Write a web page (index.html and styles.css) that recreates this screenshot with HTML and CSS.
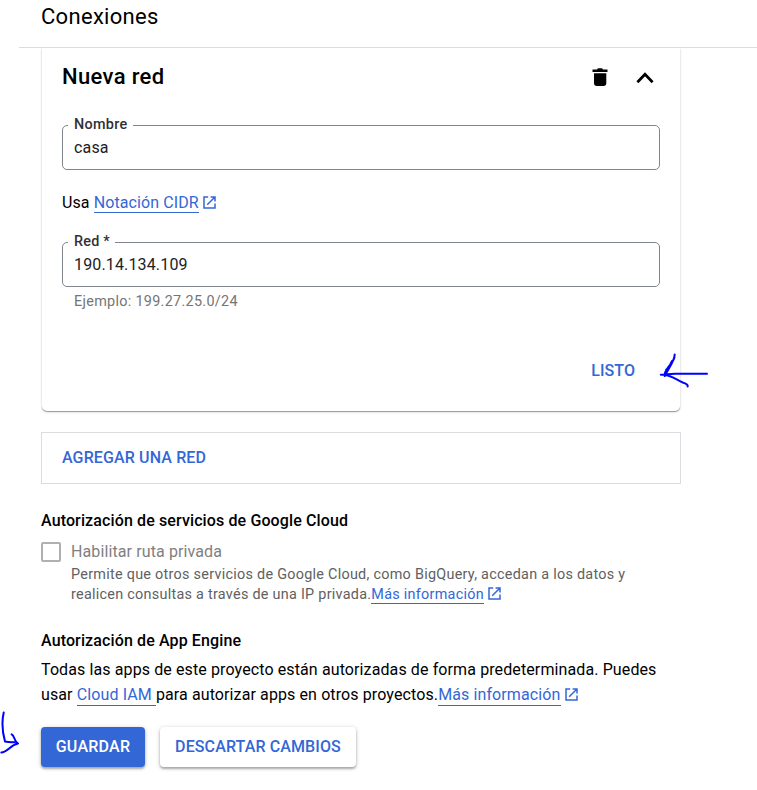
FILE: index.html
```html
<!DOCTYPE html>
<html lang="es">
<head>
<meta charset="utf-8">
<title>Conexiones</title>
<link rel="stylesheet" href="styles.css">
</head>
<body>
<svg class="defs" width="0" height="0" aria-hidden="true">
  <symbol id="external" viewBox="0 0 13 13"><path d="M5.2 1H1v11h11V7.6M7.6 1H12v4.4M12 1L4.2 8.8" fill="none" stroke="currentColor" stroke-width="1.5"/></symbol>
</svg>
<header class="header"><h1 class="header-title">Conexiones</h1></header>
<main class="content">
  <section class="card">
    <div class="card-head">
      <h2 class="card-title">Nueva red</h2>
      <svg class="trash" width="16" height="18" viewBox="0 0 16 18"><path d="M0.5 1.5H5L6 0.3h4l1 1.2h4.5v2.6H.5zM2 5.2h12.3v10.3a2.4 2.4 0 0 1-2.4 2.4H4.4A2.4 2.4 0 0 1 2 15.5z"/></svg>
      <svg class="chevron" width="18" height="12" viewBox="0 0 18 12"><path d="M1.4 10.2L9 2.2l7.6 8" fill="none" stroke="#000" stroke-width="2.7"/></svg>
    </div>
    <div class="field"><label class="field-label name-label">Nombre</label><span class="value">casa</span></div>
    <p class="hint">Usa <a class="link">Notación CIDR</a><svg class="external"><use href="#external"/></svg></p>
    <div class="field"><label class="field-label net-label">Red *</label><span class="value">190.14.134.109</span></div>
    <p class="example">Ejemplo: 199.27.25.0/24</p>
    <div class="card-actions"><button class="done">LISTO</button></div>
  </section>
  <button class="add">AGREGAR UNA RED</button>
  <h3 class="section-title services">Autorización de servicios de Google Cloud</h3>
  <div class="option">
    <span class="checkbox"></span>
    <div class="option-body">
      <p class="option-title">Habilitar ruta privada</p>
      <p class="option-text">Permite que otros servicios de Google Cloud, como BigQuery, accedan a los datos y<br>realicen consultas a través de una IP privada.<a class="link">Más información</a><svg class="external"><use href="#external"/></svg></p>
    </div>
  </div>
  <h3 class="section-title engine">Autorización de App Engine</h3>
  <p class="engine-text">Todas las apps de este proyecto están autorizadas de forma predeterminada. Puedes<br>usar <a class="link padded">Cloud IAM</a>para autorizar apps en otros proyectos.<a class="link">Más información</a><svg class="external"><use href="#external"/></svg></p>
  <div class="buttons"><button class="button primary">GUARDAR</button><button class="button discard">DESCARTAR CAMBIOS</button></div>
</main>
<svg class="ink ink-right" width="50" height="36" viewBox="0 0 50 36"><path d="M48 20.7H16L1.8 21.7M15.7 1.5C15.5 8 11 13 5.7 23M15.5 4C14 11 7 14 5.5 21.5M13 8L10 14L7 17M5 21.5C14 23 18 27.5 24.3 29.7Q29 31 28.7 33.5"/></svg>
<svg class="ink ink-left" width="21" height="45" viewBox="0 0 21 45"><path d="M3.7 2.5C2 10 1.8 20 5 31.5Q10 32.5 15 32M11.7 24.3C15 26 13 30 18 33.5C10 35 8 42 1.3 42.5"/></svg>
</body>
</html>
```

FILE: styles.css
```css
* { box-sizing: border-box; }
body { margin: 0; width: 757px; height: 790px; overflow: hidden; position: relative; background: #fff; color: #000; font-family: Roboto, sans-serif; font-size: 16px; }
h1, h2, h3, p { margin: 0; }
button { font: inherit; border: 0; padding: 0; background: #fff; color: #3367d6; font-weight: 500; }
.defs { position: absolute; }
.header { height: 48px; margin-left: 19px; border-bottom: 1px solid #dadce0; padding: 1px 0 0 22px; }
.header-title { font-size: 22px; font-weight: 400; line-height: 32px; letter-spacing: .3px; }
.content { margin-left: 41px; width: 640px; }
.card { height: 363px; margin: 0 1px; padding: 0 20px; border-radius: 0 0 5px 5px; box-shadow: 0 1px 1px rgba(0,0,0,.34), 0 1px 3px rgba(0,0,0,.14); clip-path: inset(0 -8px -8px -8px); }
.card-head { height: 77px; display: flex; align-items: flex-start; }
.card-title { flex: 1; font-size: 22px; line-height: 30px; margin-top: 14px; font-weight: 500; letter-spacing: .35px; }
.trash { margin: 20px 28px 0 0; }
.chevron { margin: 24px 6px 0 0; }
.field { position: relative; height: 45px; border: 1px solid #80868b; border-radius: 5px; padding: 10px 11px; line-height: 24px; }
.field-label { position: absolute; left: 5px; top: -12px; height: 20px; padding-left: 6px; background: #fff; color: #303134; font-weight: 500; font-size: 14.4px; line-height: 22px; letter-spacing: .3px; }
.name-label { width: 65px; }
.net-label { width: 47px; letter-spacing: .2px; }
.value { color: #202124; letter-spacing: .15px; }
.hint { height: 72px; padding-top: 21px; line-height: 24px; letter-spacing: .1px; }
.link { color: #3367d6; display: inline-block; line-height: 20px; border-bottom: 1px solid #3367d6; }
.hint .link { line-height: 19px; }
.padded { padding-right: 4px; }
.external { width: 13px; height: 13px; color: #3367d6; margin-left: 4px; vertical-align: -1px; }
.example { margin: 5px 0 0 12px; font-size: 14.4px; line-height: 20px; letter-spacing: .3px; color: #757575; }
.card-actions { display: flex; justify-content: flex-end; margin-top: 47px; padding-right: 25px; }
.done { line-height: 24px; letter-spacing: .05px; }
.add { display: block; width: 640px; height: 52px; margin-top: 21px; border: 1px solid #dadce0; padding: 0 0 2px 20px; text-align: left; letter-spacing: .13px; }
.section-title { font-size: 16px; line-height: 24px; font-weight: 500; letter-spacing: .12px; }
.services { margin-top: 25px; }
.option { display: flex; gap: 10px; margin-top: 7px; }
.checkbox { width: 20px; height: 20px; margin-top: 2px; border: 2px solid #b0b0b0; border-radius: 2px; }
.option-body { white-space: nowrap; }
.option-title { line-height: 24px; color: #808080; letter-spacing: .11px; }
.option-text { margin-top: 1px; font-size: 14.4px; line-height: 20px; color: #616161; letter-spacing: .27px; }
.option-text .link { line-height: 16px; }
.engine { margin-top: 24px; }
.engine-text { line-height: 25px; margin-top: 4px; letter-spacing: .11px; white-space: nowrap; }
.buttons { display: flex; gap: 15px; margin-top: 20px; }
.button { height: 40px; padding-bottom: 2px; border-radius: 4px; letter-spacing: .12px; box-shadow: 0 2px 2px rgba(0,0,0,.22), 0 1px 4px rgba(0,0,0,.24); }
.primary { width: 104px; background: #3367d6; color: #fff; letter-spacing: .25px; }
.discard { width: 196px; }
.ink { position: absolute; fill: none; stroke: #00f; stroke-width: 2; stroke-linecap: round; stroke-linejoin: round; }
.ink-right { left: 659px; top: 353px; }
.ink-left { left: 0; top: 710px; }
```
